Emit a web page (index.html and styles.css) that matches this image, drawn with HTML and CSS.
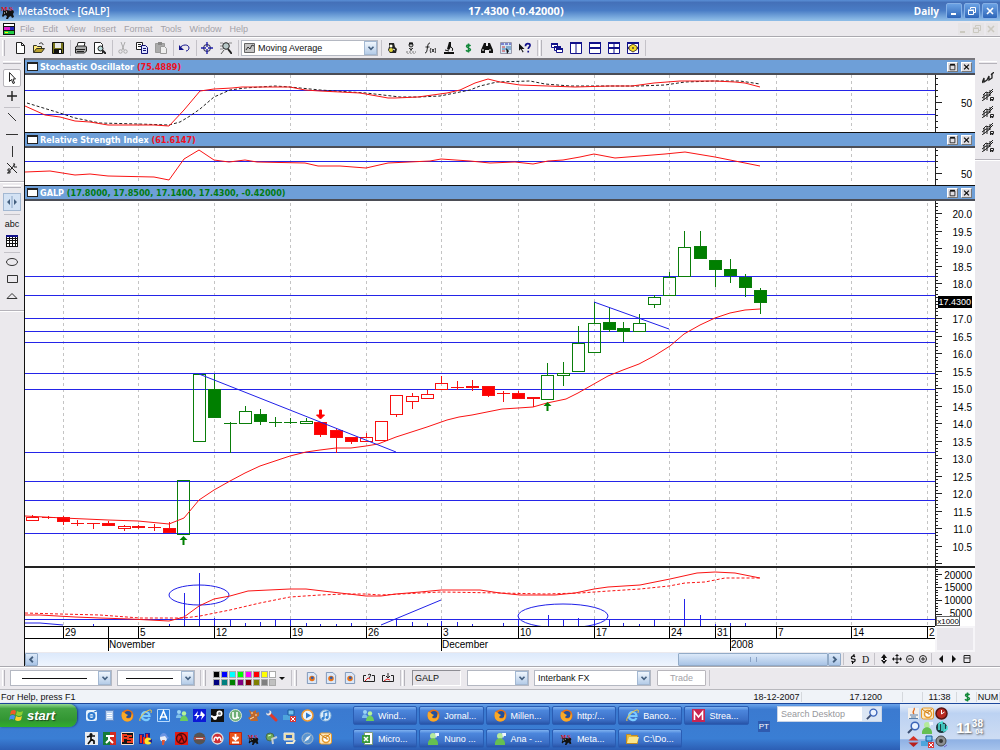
FILE: index.html
```
<!DOCTYPE html>
<html lang="en">
<head>
    <meta charset="UTF-8">
    <meta name="viewport" content="width=device-width, initial-scale=1.0">
    <title>MetaStock - [GALP]</title>
    <link rel="stylesheet" href="styles.css">
</head>
<body>

<!-- icon set -->
<svg class="sprite" aria-hidden="true">
    <symbol id="i-bull" viewBox="-1 -3 16 16"><text x="0" y="5" class="ms">M</text><text x="8" y="5" class="ms">S</text><path d="M2 4l2 1 2-1 3 1 3-1 1 2-1 2 1 3-2 1-1-2-2 1-1 2H5l1-3-2-1-2 2-1-1 1-3z" fill="#111"/><path d="M5 6h1M3 7h1" stroke="#fff"/></symbol>
    <symbol id="i-doc" viewBox="0 0 12 12"><path d="M0 0h12v12H0z" fill="#111"/><path d="M1 1h10v2H1z" fill="#fff"/><path d="M1 4h10v3H1z" fill="#e020d0"/><path d="M7 4h4v3H7z" fill="#22b"/><path d="M1 8h10v3H1z" fill="#2c4"/><path d="M2 9h3v1H2z" fill="#ff0"/></symbol>
    <symbol id="i-new" viewBox="0 0 12 12"><path d="M2.500.500h5l3 3v8h-8zM7.500.500v3h3" fill="#fff" stroke="#222"/></symbol>
    <symbol id="i-open" viewBox="0 0 12 12"><path d="M.500 10.500v-7h3l1 1h4v2" fill="#ffe97a" stroke="#332"/><path d="M.500 10.500l3-4h8l-3 4z" fill="#b8a030" stroke="#332"/><path d="M6 2c2-2 4-1 4 1" fill="none" stroke="#222"/></symbol>
    <symbol id="i-save" viewBox="0 0 12 12"><path d="M.500.500h11v11h-11z" fill="#77741a" stroke="#111"/><path d="M3 1h6v5H3z" fill="#e8e8e8"/><path d="M2 7h8v4H2z" fill="#111"/><path d="M7 8h2v3H7z" fill="#fff"/></symbol>
    <symbol id="i-print" viewBox="0 0 12 12"><path d="M3 .500h7l-1 4H2z" fill="#fff" stroke="#222"/><path d="M.500 5l2-1h8l1 1v4l-2 2h-9z" fill="#a9a9a9" stroke="#222"/><path d="M1 7.500h9M2 9.500h7" stroke="#222"/></symbol>
    <symbol id="i-preview" viewBox="0 0 12 12"><path d="M.500.500h6l2 2v9h-8z" fill="#fff" stroke="#222"/><circle cx="6.500" cy="6.500" r="2.500" fill="#bdd" stroke="#222"/><path d="M8.500 8.500L12 12" stroke="#222" stroke-width="2"/></symbol>
    <symbol id="i-cut" viewBox="0 0 12 12"><path d="M4 0l3 8M8 0L5 8" stroke="#aaa" fill="none"/><circle cx="3.500" cy="9.500" r="1.700" fill="none" stroke="#aaa"/><circle cx="8.500" cy="9.500" r="1.700" fill="none" stroke="#aaa"/></symbol>
    <symbol id="i-copy" viewBox="0 0 12 12"><path d="M.500.500h6v7h-6z" fill="#fff" stroke="#222"/><path d="M2 2.500h3M2 4.500h3" stroke="#222"/><path d="M5.500 3.500h4l2 2v6h-6z" fill="#dfe4ff" stroke="#117"/><path d="M7 6.500h3M7 8.500h3" stroke="#117"/></symbol>
    <symbol id="i-paste" viewBox="0 0 12 12"><path d="M.500 1.500h9v9h-9z" fill="#aaa" stroke="#999"/><path d="M3 0h4v3H3z" fill="#888"/><path d="M5.500 4.500h4l2 2v5h-6z" fill="#eee" stroke="#999"/></symbol>
    <symbol id="i-undo" viewBox="0 0 12 12"><path d="M2 6c2-4 9-4 9 0 0 1-1 3-3 3" fill="none" stroke="#11118a"/><path d="M1 3v5h5z" fill="#11118a"/></symbol>
    <symbol id="i-target" viewBox="0 0 12 12"><circle cx="6" cy="6" r="3.500" fill="none" stroke="#224"/><path d="M6 0v5M6 7v5M0 6h5M7 6h5" stroke="#22a" stroke-width="1.400"/></symbol>
    <symbol id="i-zoom" viewBox="0 0 12 12"><path d="M0 1h3M0 4h2M0 7h3M9 1h3" stroke="#888"/><circle cx="6" cy="4" r="3.300" fill="#b7c7c7" stroke="#222"/><path d="M8 7l4 5" stroke="#222" stroke-width="2"/><path d="M1 12l3-4" stroke="#555"/></symbol>
    <symbol id="i-chart" viewBox="0 0 12 12"><path d="M.500 1.500h10v9h-10z" fill="#c5c5c5" stroke="#666"/><path d="M2 8l2-3 2 2 2-4 2 1" fill="none" stroke="#333"/></symbol>
    <symbol id="i-down" viewBox="0 0 12 12"><path d="M3 4.500l3 3 3-3" fill="none" stroke="#45607f" stroke-width="2"/></symbol>
    <symbol id="i-left" viewBox="0 0 12 12"><path d="M7.500 3l-3 3 3 3" fill="none" stroke="#45607f" stroke-width="2"/></symbol>
    <symbol id="i-right" viewBox="0 0 12 12"><path d="M4.500 3l3 3-3 3" fill="none" stroke="#45607f" stroke-width="2"/></symbol>
    <symbol id="i-bulb" viewBox="0 0 12 12"><path d="M3 1h5l1 4 2 2-1 4H4L2 8l1-3z" fill="#222"/><circle cx="5" cy="4" r="1.500" fill="#ffe"/><circle cx="5" cy="8" r="2" fill="#e4d63a"/><path d="M7 7l2 1" stroke="#fff"/></symbol>
    <symbol id="i-expert" viewBox="0 0 12 12"><circle cx="6" cy="3" r="2" fill="#ccc" stroke="#222"/><path d="M4 1.500h4" stroke="#111" stroke-width="2"/><path d="M6 6v3M4 6l2 2 2-2" stroke="#333" fill="none"/><path d="M1 10h10M2 12h9" stroke="#777" stroke-dasharray="2 1"/></symbol>
    <symbol id="i-fx" viewBox="0 0 12 12"><path d="M1 11c2 0 2-3 2.500-6C4 2 4.500 1 6 1M1.500 5h4" fill="none" stroke="#222"/><path d="M7 6c-1 2-1 3 0 5M8 7l2 3M10 7l-2 3M11 6c1 2 1 3 0 5" fill="none" stroke="#222"/></symbol>
    <symbol id="i-scope" viewBox="0 0 12 12"><path d="M6 0h2v5L6 8 4 7z" fill="#111"/><path d="M2 8l4 1M8 5c2 1 2 3 1 4" fill="none" stroke="#111"/><path d="M1 11h10" stroke="#111" stroke-width="2"/></symbol>
    <symbol id="i-dollar" viewBox="0 0 12 12"><path d="M8.500 4C7.500 2.500 4.500 2.500 4.500 4.200s4 1.600 4 3.400-3.300 2-4.500.600M6.500 1.500v9" fill="none" stroke="#12883a" stroke-width="1.500"/></symbol>
    <symbol id="i-binoc" viewBox="0 0 12 12"><path d="M3 1h2v3h2V1h2l3 7v3H8V8H4v3H0V8z" fill="#111"/><path d="M2 7v2M9 7v2" stroke="#fff"/></symbol>
    <symbol id="i-list" viewBox="0 0 12 12"><path d="M.500.500h11v11h-11z" fill="#d3e5f5" stroke="#99a"/><path d="M1 2h10" stroke="#22a" stroke-dasharray="3 1"/><path d="M2 5h3M2 9h3" stroke="#c33"/><path d="M6 5h5M2 7h9" stroke="#37a"/><path d="M6 6l3 3-2 3z" fill="#111"/></symbol>
    <symbol id="i-help" viewBox="0 0 13 12"><path d="M0 1v8l2-2 2 4 1-1-2-3h3z" fill="#111"/><path d="M7 4c0-4 5-3 5-1 0 2-2 2-2 4M10 9v2" fill="none" stroke="#11118a" stroke-width="1.800"/></symbol>
    <symbol id="i-casc" viewBox="0 0 12 12"><g fill="#fff" stroke="#11118a"><path d="M.500 1.500h6v4h-6z"/><path d="M0 2h7" stroke-width="2"/><path d="M3.500 4.500h6v4h-6z"/><path d="M3 5h7" stroke-width="2"/><path d="M5.500 6.500h6v4h-6z"/><path d="M5 7h7" stroke-width="2"/></g></symbol>
    <symbol id="i-win2" viewBox="0 0 12 12"><path d="M.500.500h11v11h-11zM6 1v11" fill="#fff" stroke="#11118a"/><path d="M0 1h12" stroke="#11118a" stroke-width="2"/></symbol>
    <symbol id="i-win3" viewBox="0 0 12 12"><path d="M.500.500h11v11h-11z" fill="#fff" stroke="#11118a"/><path d="M0 1h12M0 6h12" stroke="#11118a" stroke-width="2"/></symbol>
    <symbol id="i-win4" viewBox="0 0 12 12"><path d="M.500.500h11v11h-11zM6 1v11" fill="#fff" stroke="#11118a"/><path d="M0 1h12M0 6h12" stroke="#11118a" stroke-width="2"/></symbol>
    <symbol id="i-win5" viewBox="0 0 12 12"><path d="M.500.500h11v11h-11z" fill="#fff" stroke="#11118a"/><path d="M0 1h12M0 6h12" stroke="#11118a" stroke-width="2"/><path d="M6 2l4 2.500v3L6 10 2 7.500v-3z" fill="#f4dc28" stroke="#543"/><circle cx="6" cy="6" r="1" fill="#543"/></symbol>
    <symbol id="i-ptr" viewBox="0 0 12 12"><path d="M3.500.500v9l2-2 1.500 4 1.500-.500L7 7h2.500z" fill="#fff" stroke="#222"/></symbol>
    <symbol id="i-plus" viewBox="0 0 12 12"><path d="M6 1v10M1 6h10" stroke="#222" stroke-width="1.400"/></symbol>
    <symbol id="i-diag" viewBox="0 0 12 12"><path d="M2 2l8 8" stroke="#333"/></symbol>
    <symbol id="i-hor" viewBox="0 0 12 12"><path d="M0 6.500h12" stroke="#333"/></symbol>
    <symbol id="i-ver" viewBox="0 0 12 12"><path d="M6.500 1v11" stroke="#333"/></symbol>
    <symbol id="i-gann" viewBox="0 0 12 12"><path d="M1 1l10 10M2 11l7-9M8 1v4h3M4 7H2v2h2v2H1" fill="none" stroke="#222"/></symbol>
    <symbol id="i-split" viewBox="0 0 12 12"><path d="M6 0v12" stroke="#8aa4c4"/><path d="M4 3v6L1 6zM8 3v6l3-3z" fill="#45607f"/></symbol>
    <symbol id="i-grid" viewBox="0 0 12 12"><path d="M0 0h12v12H0z" fill="#fff"/><path d="M.500 0v12M3.500 0v12M6.500 0v12M9.500 0v12M11.500 0v12M0 3.500h12M0 5.500h12M0 8.500h12M0 11.500h12" stroke="#111"/><path d="M0 1h12" stroke="#11118a" stroke-width="2"/></symbol>
    <symbol id="i-ell" viewBox="0 0 12 12"><ellipse cx="6" cy="6" rx="5.500" ry="3.500" fill="none" stroke="#333"/></symbol>
    <symbol id="i-rect" viewBox="0 0 12 12"><path d="M1.500 2.500h10v7h-10z" fill="none" stroke="#333"/></symbol>
    <symbol id="i-tri" viewBox="0 0 12 12"><path d="M6 3.500l5 5H1z" fill="none" stroke="#333"/></symbol>
    <symbol id="i-tr1" viewBox="0 0 12 12"><path d="M0 11l2-5v4l3-2 2-4v4l3-2V1M9 3l3-3" fill="none" stroke="#222" stroke-width="1.300"/></symbol>
    <symbol id="i-tr2" viewBox="0 0 12 12"><path d="M1 6l3-3 3 1 4-4M0 9l4-3 3 0 4-4M0 12l4-3 4-3M2 5v6M5 3v8M8 1v6" fill="none" stroke="#222"/><path d="M8.500 12V8.500h3v2h-3l3 1.500" fill="none" stroke="#222"/></symbol>
    <symbol id="i-max" viewBox="0 0 10 10"><path d="M2 2.500h6v6H2z" fill="none" stroke="#111"/><path d="M2 2h6" stroke="#111" stroke-width="2"/></symbol>
    <symbol id="i-x" viewBox="0 0 10 10"><path d="M2 2l6 6M8 2L2 8" stroke="currentColor" stroke-width="1.600"/></symbol>
    <symbol id="i-min" viewBox="0 0 10 10"><path d="M2 8h5" stroke="currentColor" stroke-width="2"/></symbol>
    <symbol id="i-rest" viewBox="0 0 10 10"><path d="M3.500 3V1.500h5v5H7M1.500 4.500h5v4h-5zM1 4h6" fill="none" stroke="currentColor"/></symbol>
    <symbol id="i-cyc" viewBox="0 0 12 12"><path d="M8 4L6.500 2.500 4.500 4v1.500l3.500 1V8L6 9.500 4.500 8" fill="none" stroke="#111" stroke-width="1.200"/><path d="M7 1v3M5.500 8v3" stroke="#111"/></symbol>
    <symbol id="i-updn" viewBox="0 0 12 12"><path d="M6 1l3 4H3zM6 11l3-4H3zM5 4h2v4H5z" fill="#111"/></symbol>
    <symbol id="i-move" viewBox="0 0 12 12"><path d="M6 2v8M2 6h8" stroke="#111"/><path d="M6 1l2 2H4zM6 11l2-2H4zM1 6l2-2v4zM11 6L9 4v4z" fill="#111"/></symbol>
    <symbol id="i-zout" viewBox="0 0 12 12"><circle cx="6" cy="6" r="3.500" fill="none" stroke="#222"/><path d="M4 6h4" stroke="#222"/></symbol>
    <symbol id="i-zin" viewBox="0 0 12 12"><circle cx="6" cy="6" r="3.500" fill="none" stroke="#222"/><path d="M4 6h4M6 4v4" stroke="#222"/></symbol>
    <symbol id="i-prev" viewBox="0 0 12 12"><path d="M8 2v8L4 6z" fill="#111"/></symbol>
    <symbol id="i-next" viewBox="0 0 12 12"><path d="M4 2v8l4-4z" fill="#111"/></symbol>
    <symbol id="i-cal" viewBox="0 0 12 12"><path d="M3 2.500h6v7H3zM3 5h6" fill="none" stroke="#222"/></symbol>
    <symbol id="i-ffpage" viewBox="0 0 12 13"><path d="M1 .500h7l3 3v9H1z" fill="#dce8f8" stroke="#7b93b5"/><circle cx="6" cy="7" r="3" fill="#e8731a"/><circle cx="6.300" cy="6.300" r="1.500" fill="#2f5fae"/></symbol>
    <symbol id="i-c2" viewBox="0 0 12 12"><path d="M3 3.500H.500v6h11v-6H9M5 3l2-1 1 1-2 3" fill="none" stroke="#222"/><path d="M2 9l3-3 2 1" fill="none" stroke="#d22"/></symbol>
    <symbol id="i-c3" viewBox="0 0 12 12"><path d="M3 3.500H.500v6h11v-6H9M6 1v5M4 4l2 2 2-2" fill="none" stroke="#222"/><path d="M2 9l3-2 3 1" fill="none" stroke="#d22"/></symbol>
    <!-- desktop programs -->
    <symbol id="p-web" viewBox="0 0 13 13"><rect x="1" y="1" width="11" height="11" rx="2" fill="#e6f2fc"/><circle cx="6.500" cy="7" r="3" fill="none" stroke="#2b78cf" stroke-width="2"/><path d="M4 7h6M9 3l3-1" stroke="#2b78cf"/></symbol>
    <symbol id="p-note" viewBox="0 0 13 13"><path d="M2.500 1.500h8v10h-8z" fill="#bcd3f2" stroke="#5f87c5"/><path d="M4 4.500h5M4 6.500h5M4 8.500h5" stroke="#fff"/></symbol>
    <symbol id="p-ff" viewBox="0 0 13 13"><circle cx="6.500" cy="6.500" r="6" fill="#e86f12"/><circle cx="7" cy="5.500" r="3.600" fill="#234f9c"/><path d="M1 3c2 0 3 1 4 2l2 1-2 2c1 2 4 2 5 0l1-4c2 4 0 9-5 8.500C1 12 0 8 1 3z" fill="#f8a928"/></symbol>
    <symbol id="p-ie" viewBox="0 0 13 13"><path d="M10.500 9c-2 3.500-8 2.500-7.500-2.500S10 2 10.500 7H4" fill="none" stroke="#7cccff" stroke-width="2.200"/><path d="M1 12C-1 9 8 0 12 1c1 1 0 2 0 3" fill="none" stroke="#f4c83a"/></symbol>
    <symbol id="p-a" viewBox="0 0 13 13"><path d="M.500.500h12v12H.500z" fill="#2f80dd" stroke="#b9dafc"/><path d="M3 10.500L6.500 2 10 10.500M3 8h7" fill="none" stroke="#fff" stroke-width="1.500"/></symbol>
    <symbol id="p-msn" viewBox="0 0 13 13"><circle cx="4" cy="3" r="2" fill="#9bd4f4"/><path d="M1 9c0-5 5-5 6 0z" fill="#7fc0ea"/><circle cx="9" cy="4.500" r="2.200" fill="#b5f399"/><path d="M5 12c0-7 8-7 8 0z" fill="#6ccc5c"/></symbol>
    <symbol id="p-bolt" viewBox="0 0 13 13"><path d="M0 0h13v13H0z" fill="#0b18d8"/><path d="M5 2L1 7h3l-1 4 4-5H4zM8 2l4 4-4 5 1-4H7z" fill="#fff"/></symbol>
    <symbol id="p-steam" viewBox="0 0 13 13"><path d="M0 0h13v13H0z" fill="#111"/><circle cx="8.500" cy="4.500" r="2.300" fill="#777" stroke="#fff" stroke-width="1.500"/><path d="M0 7l4 2 3-3" stroke="#fff" stroke-width="2" fill="none"/><circle cx="4" cy="9" r="2" fill="#fff"/></symbol>
    <symbol id="p-ut" viewBox="0 0 13 13"><circle cx="6.500" cy="6.500" r="6" fill="#6cae75" stroke="#d6e8da"/><path d="M4 3v5c0 2 4 2 4 0V3v5l2 1" fill="none" stroke="#fff" stroke-width="1.600"/></symbol>
    <symbol id="p-mule" viewBox="0 0 13 13"><path d="M2 1l3 2 4-2v3l3-1v4l-2 1 1 4H4L1 9l3-2z" fill="#c0682c"/><path d="M4 4h2M3 10l4-2M8 6h2" stroke="#ffe3b0"/></symbol>
    <symbol id="p-wrench" viewBox="0 0 13 13"><path d="M5 5l6 6" stroke="#e0392b" stroke-width="3" stroke-linecap="round"/><path d="M3.500 1.500L5 3 3 5 1.500 3.500C.500 6 3 7 5 6l1-1c1-2 0-4-2.500-3.500z" fill="#e5e5e5"/></symbol>
    <symbol id="p-net" viewBox="0 0 13 13"><path d="M0 6h8v5H0z" fill="#4ea5dc"/><path d="M5 1h6v5H5z" fill="#75c3ef" stroke="#1b5d9c"/><path d="M7 7h6v6H7z" fill="#d83a3a"/><path d="M8 8l4 4M12 8l-4 4" stroke="#fff"/></symbol>
    <symbol id="p-wmp" viewBox="0 0 13 13"><circle cx="6.500" cy="6.500" r="5.500" fill="#eaf3fd" stroke="#f09a30" stroke-width="1.500"/><path d="M5 3.500v6l5-3z" fill="#2a79d0"/></symbol>
    <symbol id="p-itunes" viewBox="0 0 13 13"><circle cx="6.500" cy="6.500" r="5.500" fill="#d8eaf8" stroke="#8db7da"/><path d="M5 9.500V3.500l4-1v6" fill="none" stroke="#2e7fd2" stroke-width="1.300"/><circle cx="4" cy="9.500" r="1.400" fill="#2e7fd2"/><circle cx="8" cy="8.500" r="1.400" fill="#2e7fd2"/></symbol>
    <symbol id="p-cs" viewBox="0 0 13 13"><path d="M0 0h13v13H0z" fill="#e9edf2"/><circle cx="6" cy="2.500" r="1.500" fill="#111"/><path d="M2 5l3-1h5M6 4v4l-3 4M6 7l3 2v3" stroke="#111" stroke-width="1.700" fill="none"/></symbol>
    <symbol id="p-flag" viewBox="0 0 13 13"><path d="M0 0h13v13H0z" fill="#157b38"/><path d="M7 0h6v13H7z" fill="#cf2a22"/><path d="M3 4h8M6 3v5l-3 3M6 7l4 4" stroke="#fff" stroke-width="2" fill="none"/></symbol>
    <symbol id="p-fs" viewBox="0 0 13 13"><path d="M.500.500h12v12H.500z" fill="#161616" stroke="#f4ddd0"/><path d="M2 10V3h4M2 6h4M11 4H7v3h4v3H6" fill="none" stroke="#ee3a1c" stroke-width="2"/></symbol>
    <symbol id="p-pac" viewBox="0 0 13 13"><path d="M0 2h5v10H0zM6 1h5v7H6z" fill="#22218e"/><path d="M2 3v8M5 5v7M8 2v4" stroke="#ee2c1b" stroke-width="2"/><circle cx="9" cy="9" r="3.500" fill="#ffe52b"/><path d="M9 9l4-2v4z" fill="#22218e"/></symbol>
    <symbol id="p-santa" viewBox="0 0 13 13"><circle cx="6.500" cy="6" r="3.500" fill="#e8edf7"/><path d="M3 5c1-5 6-5 7-1l2 2-2 1-2-3z" fill="#6a94e2"/><path d="M5 8h3l-1 5H5z" fill="#dd5436"/></symbol>
    <symbol id="p-hl" viewBox="0 0 13 13"><path d="M0 0h13v13H0z" fill="#e21d15"/><circle cx="6.500" cy="6.500" r="5" fill="none" stroke="#5c0a08" stroke-width="1.400"/><path d="M4 3h2l3 7M6.500 6L4 10" fill="none" stroke="#5c0a08" stroke-width="1.500"/></symbol>
    <symbol id="p-gun" viewBox="0 0 13 13"><circle cx="6.500" cy="6.500" r="6" fill="#575352"/><path d="M1 5h11v3H1z" fill="#a34d48"/><path d="M3 6.500h7" stroke="#ddd"/></symbol>
    <symbol id="p-ball" viewBox="0 0 13 13"><circle cx="6.500" cy="6.500" r="5.500" fill="#cf3036" stroke="#ddd" stroke-width="1.300"/><path d="M3 9c0-4 2-5 3.500-2C8 4 10 5 10 9" fill="none" stroke="#fff" stroke-width="1.500"/></symbol>
    <symbol id="p-dl" viewBox="0 0 13 13"><path d="M.500.500h12v12H.500z" fill="#e8531a" stroke="#bb2412"/><path d="M6.500 2v5M3.500 5l3 3 3-3M3 10.500h7" stroke="#fff" stroke-width="1.800" fill="none"/></symbol>
    <symbol id="p-key" viewBox="0 0 13 13"><circle cx="5" cy="5" r="4" fill="#6eaa58" stroke="#465"/><path d="M7 7l5-2M7 6l1 6" stroke="#c8cfd6" stroke-width="2"/><path d="M3 4l3-1" stroke="#dfc"/></symbol>
    <symbol id="p-mon" viewBox="0 0 13 13"><path d="M1 1h10v7H1z" fill="#e9dba0" stroke="#e8e8e8"/><path d="M3 3h6v3H3z" fill="#2f66c0"/><path d="M3 11h7l2-3" stroke="#f2ead0" stroke-width="2" fill="none"/></symbol>
    <symbol id="p-comp" viewBox="0 0 13 13"><circle cx="6.500" cy="6.500" r="5.500" fill="#5b95cf" stroke="#a9bac9"/><path d="M10 3L7.500 7.500 3 10l2.500-4.500z" fill="#f1f4f6"/></symbol>
    <symbol id="p-out" viewBox="0 0 13 13"><rect x=".500" y="1" width="12" height="11" rx="2" fill="#fbe9c4" stroke="#e79b2c"/><circle cx="7" cy="7" r="3.500" fill="#fff" stroke="#e79b2c" stroke-width="1.500"/><path d="M1 2l5 4 5-4M7 5v2h2" fill="none" stroke="#c77a15"/></symbol>
    <symbol id="p-xls" viewBox="0 0 13 13"><path d="M3.500.500h8v12h-8z" fill="#fff" stroke="#7b9c7b"/><path d="M1 3h8v8H1z" fill="#3a9a3c"/><path d="M3 5l4 4M7 5L3 9" stroke="#fff" stroke-width="1.500"/></symbol>
    <symbol id="p-bud" viewBox="0 0 13 13"><circle cx="6" cy="4" r="3" fill="#b4ea9c"/><path d="M1 13c-1-9 11-9 10 0z" fill="#65bf52"/><path d="M8 1h4v3h-2l-1 2z" fill="#eef6ff"/></symbol>
    <symbol id="p-dir" viewBox="0 0 13 13"><path d="M.500 2.500h4l1 1h6v8H.500z" fill="#e8bb3d" stroke="#c08a20"/><path d="M1 11l2-6h10l-2 6z" fill="#fbe58c"/></symbol>
    <symbol id="p-m" viewBox="0 0 13 13"><path d="M0 0h13v13H0z" fill="#c82452"/><path d="M2.500 11V3l4 5 4-5v8" fill="none" stroke="#fff" stroke-width="1.600"/></symbol>
    <symbol id="p-java" viewBox="0 0 13 13"><path d="M1 1h11v11H1z" fill="#f3f0ec"/><path d="M7 1c2 2-3 3 0 6" fill="none" stroke="#e06a20" stroke-width="1.300"/><path d="M3 8h6M4 10h5M9 8h2M2 11.500h9" stroke="#5a7fa8"/></symbol>
    <symbol id="p-clk" viewBox="0 0 13 13"><circle cx="6.500" cy="6.500" r="5.500" fill="#b82a22" stroke="#571512" stroke-width="1.500"/><path d="M6.500 3v4l3-2" stroke="#fff" fill="none"/></symbol>
    <symbol id="p-mag" viewBox="0 0 13 13"><circle cx="8" cy="5" r="3.800" fill="#e9f2ff" stroke="#3a63b8" stroke-width="1.500"/><path d="M5 8l-4 4" stroke="#3a4d70" stroke-width="2"/></symbol>
    <symbol id="p-sync" viewBox="0 0 13 13"><circle cx="6.500" cy="6.500" r="5.500" fill="#1e3b3f"/><path d="M4 9V3l3-2v9M9 3v7l3-2V5" fill="none" stroke="#4be0d8" stroke-width="1.600"/></symbol>
    <symbol id="p-ud" viewBox="0 0 13 13"><path d="M6.500 1l5 4.500h-10z" fill="#d33328"/><path d="M6.500 12l5-4.500h-10z" fill="#b7201c"/></symbol>
    <symbol id="p-vol" viewBox="0 0 13 13"><circle cx="6" cy="6" r="5" fill="#8c8f92" stroke="#444"/><circle cx="6" cy="6" r="2" fill="#333"/><path d="M9 12l3-2" stroke="#76c"/></symbol>
    <symbol id="p-win" viewBox="0 0 14 13"><path d="M2 2q3-2 5 0L6 6q-2-2-5 0z" fill="#f0592a"/><path d="M8 2q3 2 6 0l-1 4q-3 2-6 0z" fill="#8ed032"/><path d="M1 7q3-2 5 0l-1 4q-2-2-5 0z" fill="#4a8cf0"/><path d="M7 7q3 2 6 0l-1 4q-3 2-6 0z" fill="#fbd02e"/></symbol>
</svg>

<header class="titlebar">
    <svg class="logo"><use href="#i-bull"/></svg>
    <h1>MetaStock - [GALP]</h1>
    <span class="quote">17.4300 (-0.42000)</span>
    <span class="period">Daily</span>
    <button class="win-btn" aria-label="Minimize"><svg><use href="#i-min"/></svg></button>
    <button class="win-btn" aria-label="Restore"><svg><use href="#i-rest"/></svg></button>
    <button class="win-btn" aria-label="Close"><svg><use href="#i-x"/></svg></button>
</header>

<nav class="menubar">
    <svg class="ico"><use href="#i-doc"/></svg>
    <button>File</button>
    <button>Edit</button>
    <button>View</button>
    <button>Insert</button>
    <button>Format</button>
    <button>Tools</button>
    <button>Window</button>
    <button>Help</button>
    <span class="spacer"></span>
    <button class="doc-btn" aria-label="Minimize chart"><svg><use href="#i-min"/></svg></button>
    <button class="doc-btn" aria-label="Restore chart"><svg><use href="#i-rest"/></svg></button>
    <button class="doc-btn" aria-label="Close chart"><svg><use href="#i-x"/></svg></button>
</nav>

<div class="toolbar">
    <span class="grip"></span>
    <span class="tools" data-icons="new open save | print preview | cut copy paste | undo | target zoom |"></span>
    <span class="combo indicator">
        <svg class="ico"><use href="#i-chart"/></svg>
        <select aria-label="Indicator"><option>Moving Average</option></select>
        <span class="drop"><svg><use href="#i-down"/></svg></span>
    </span>
    <span class="tools" data-icons="| bulb expert fx scope dollar binoc list help |"></span>
    <span class="grip"></span>
    <span class="tools" data-icons="casc win2 win3 win4 win5 |"></span>
</div>

<main class="workspace">
    <aside class="side left">
        <div class="group">
            <span class="hgrip"></span>
            <button class="tool active" aria-label="Select"><svg><use href="#i-ptr"/></svg></button>
            <span class="tools col" data-icons="plus | diag hor ver gann"></span>
        </div>
        <div class="group">
            <span class="hgrip"></span>
            <button class="tool blue" aria-label="Split"><svg><use href="#i-split"/></svg></button>
            <span class="tools col" data-icons="|"></span>
            <button class="tool abc">abc</button>
            <span class="tools col" data-icons="grid | ell rect tri"></span>
        </div>
    </aside>

    <div class="charts">
        <section>
            <div class="panel-title">
                <i></i><h2>Stochastic Oscillator <b class="red">(75.4889)</b></h2>
                <button aria-label="Maximize"><svg><use href="#i-max"/></svg></button>
                <button aria-label="Close"><svg><use href="#i-x"/></svg></button>
            </div>
            <div class="row"><svg class="plot" id="stoch" height="57" viewBox="25 74 910 57" preserveAspectRatio="none"></svg><svg class="axis" id="stochAxis" width="40" height="57" viewBox="935 74 40 57"></svg></div>
        </section>
        <section>
            <div class="panel-title">
                <i></i><h2>Relative Strength Index <b class="red">(61.6147)</b></h2>
                <button aria-label="Maximize"><svg><use href="#i-max"/></svg></button>
                <button aria-label="Close"><svg><use href="#i-x"/></svg></button>
            </div>
            <div class="row"><svg class="plot" id="rsi" height="37" viewBox="25 148 910 37" preserveAspectRatio="none"></svg><svg class="axis" id="rsiAxis" width="40" height="37" viewBox="935 148 40 37"></svg></div>
        </section>
        <section>
            <div class="panel-title">
                <i></i><h2>GALP <b class="green">(17.8000, 17.8500, 17.1400, 17.4300, -0.42000)</b></h2>
                <button aria-label="Maximize"><svg><use href="#i-max"/></svg></button>
                <button aria-label="Close"><svg><use href="#i-x"/></svg></button>
            </div>
            <div class="row"><svg class="plot" id="price" height="365" viewBox="25 201 910 365" preserveAspectRatio="none"></svg><svg class="axis" id="priceAxis" width="40" height="365" viewBox="935 201 40 365"></svg></div>
        </section>
        <section class="volume">
            <div class="row"><svg class="plot" id="volume" height="58" viewBox="25 568 910 58" preserveAspectRatio="none"></svg><svg class="axis" id="volumeAxis" width="40" height="58" viewBox="935 568 40 58"></svg></div>
        </section>
        <div class="row dates-row">
            <svg class="dates" id="dates" height="26"></svg>
            <span class="corner"></span>
        </div>
        <div class="scroll-row">
            <div class="scroll">
                <button aria-label="Scroll left"><svg><use href="#i-left"/></svg></button>
                <span class="thumb"></span>
                <button aria-label="Scroll right"><svg><use href="#i-right"/></svg></button>
            </div>
            <span class="tools small" data-icons="| cyc"></span>
            <button class="tool period-btn">D</button>
            <span class="tools small" data-icons="| updn move zout zin | prev next cal"></span>
        </div>
    </div>

    <aside class="side right">
        <div class="group">
            <span class="hgrip"></span>
            <span class="tools col" data-icons="tr1 tr2 tr2 tr2 tr2"></span>
        </div>
    </aside>
</main>

<div class="toolbar bottom">
    <span class="grip"></span>
    <span class="combo line-style"><select aria-label="Line style"></select><span class="drop"><svg><use href="#i-down"/></svg></span></span>
    <span class="combo line-weight"><select aria-label="Line weight"></select><span class="drop"><svg><use href="#i-down"/></svg></span></span>
    <span class="sep"></span>
    <span class="grip"></span>
    <span class="palette" id="palette"></span>
    <span class="caret"></span>
    <span class="sep"></span>
    <span class="grip"></span>
    <span class="tools" data-icons="ffpage ffpage ffpage c2 c3 |"></span>
    <span class="grip"></span>
    <input class="symbol" type="text" value="GALP" aria-label="Symbol">
    <span class="combo order"><select aria-label="Order"></select><span class="drop"><svg><use href="#i-down"/></svg></span></span>
    <span class="combo broker"><select aria-label="Broker"><option>Interbank FX</option></select><span class="drop"><svg><use href="#i-down"/></svg></span></span>
    <button class="trade" disabled>Trade</button>
    <span class="sep"></span>
</div>

<footer class="statusbar">
    <span class="msg">For Help, press F1</span>
    <span class="st-date">18-12-2007</span>
    <span class="st-price">17.1200</span>
    <span class="st-gap"></span>
    <span class="st-time">11:38</span>
    <span class="st-usd"><svg class="ico"><use href="#i-dollar"/></svg></span>
    <span class="st-num">NUM</span>
</footer>

<div class="taskbar">
    <button class="start"><svg><use href="#p-win"/></svg>start</button>
    <div class="launch" id="launch"></div>
    <div class="tasks" id="tasks"></div>
    <span class="lang">PT</span>
    <form class="search">
        <input type="text" placeholder="Search Desktop" aria-label="Search Desktop">
        <button type="button" aria-label="Search"><svg><use href="#p-mag"/></svg></button>
    </form>
    <div class="tray">
        <div class="tray-icons" id="tray"></div>
        <div class="clock">11<span>38<small>04</small></span></div>
    </div>
</div>

<script>
    function icon(id) {
        return '<svg><use href="#' + id + '"/></svg>';
    }

    // toolbars
    document.querySelectorAll('[data-icons]').forEach(function(box) {
        box.innerHTML = box.dataset.icons.split(' ').map(function(name) {
            if (name === '|') return '<span class="sep"></span>';
            return '<button class="tool" aria-label="' + name + '">' + icon('i-' + name) + '</button>';
        }).join('');
    });

    var colors = ['#000', '#00f', '#0ff', '#0f0', '#f0f', '#f00', '#ff0', '#fff',
                  '#000080', '#008080', '#008000', '#800080', '#800000', '#808000', '#808080', '#c0c0c0'];
    document.getElementById('palette').innerHTML = colors.map(function(c) {
        return '<button style="background:' + c + '" aria-label="' + c + '"></button>';
    }).join('');

    var programs = 'p-web p-note p-ff p-ie p-a p-msn p-bolt p-steam p-ut p-mule p-wrench p-net p-wmp p-itunes ' +
                   'p-cs p-flag p-fs p-pac p-santa p-hl p-gun p-ball p-dl i-bull p-key p-mon p-comp p-out';
    document.getElementById('launch').innerHTML = programs.split(' ').map(function(id) {
        return '<button aria-label="' + id + '">' + icon(id) + '</button>';
    }).join('');

    var tasks = [['p-msn', 'Wind...'], ['p-ff', 'Jornal...'], ['p-ff', 'Millen...'], ['p-ff', 'http:/...'], ['p-ie', 'Banco...'], ['p-m', 'Strea...'],
                 ['p-xls', 'Micro...'], ['p-bud', 'Nuno ...'], ['p-bud', 'Ana - ...'], ['i-bull', 'Meta...'], ['p-dir', 'C:\\Do...']];
    document.getElementById('tasks').innerHTML = tasks.map(function(t) {
        return '<button>' + icon(t[0]) + '<span>' + t[1] + '</span></button>';
    }).join('');

    document.getElementById('tray').innerHTML = 'p-java p-out p-clk p-mag p-bud p-sync p-ud p-net p-vol'.split(' ').map(icon).join('');

    // charts
    var weeks = [[63, '29'], [138, '5'], [214, '12'], [290, '19'], [366, '26'], [441, '3'], [518, '10'], [594, '17'],
                 [669, '24'], [715, '31'], [776, '7'], [851, '14'], [927, '2']];
    var months = [[108, 'November'], [441, 'December'], [730, '2008']];

    // center, body top, body bottom, high, low, color (r/g), filled
    var candles = [
        [32, 517, 520, 515, 520, 'r', 0], [48, 517, 517, 516, 518, 'r', 0], [63, 517, 521, 516, 524, 'r', 1],
        [77, 523, 523, 520, 525, 'r', 0], [93, 523, 523, 523, 528, 'r', 0], [108, 523, 525, 521, 525, 'r', 1],
        [124, 526, 528, 525, 530, 'r', 0], [138, 526, 527, 525, 528, 'r', 1], [154, 527, 527, 524, 530, 'r', 0],
        [169, 528, 532, 522, 532, 'r', 1], [183, 480, 534, 480, 534, 'g', 0], [199, 374, 441, 374, 441, 'g', 0],
        [214, 389, 417, 374, 417, 'g', 1], [230, 423, 423, 422, 452, 'g', 0], [245, 411, 423, 406, 423, 'g', 0],
        [260, 414, 421, 409, 424, 'g', 1], [275, 422, 422, 417, 426, 'g', 0], [290, 422, 422, 418, 423, 'g', 0],
        [306, 421, 423, 418, 423, 'g', 0], [320, 422, 434, 422, 436, 'r', 1], [336, 430, 437, 428, 452, 'r', 1],
        [351, 437, 441, 437, 443, 'r', 1], [366, 437, 441, 433, 441, 'r', 0], [381, 421, 440, 421, 440, 'r', 0],
        [396, 395, 414, 395, 416, 'r', 0], [412, 396, 401, 393, 408, 'r', 0], [427, 394, 398, 390, 398, 'r', 0],
        [441, 383, 389, 376, 389, 'r', 0], [457, 387, 387, 381, 389, 'r', 1], [472, 386, 387, 380, 390, 'r', 1],
        [488, 386, 395, 386, 396, 'r', 1], [503, 393, 393, 391, 401, 'r', 0], [518, 393, 398, 391, 398, 'r', 1],
        [533, 397, 398, 397, 406, 'r', 0], [547, 375, 399, 363, 399, 'g', 0], [563, 373, 375, 362, 385, 'g', 0],
        [578, 343, 371, 326, 371, 'g', 0], [594, 323, 352, 302, 352, 'g', 0], [609, 322, 329, 307, 331, 'g', 1],
        [623, 328, 331, 322, 341, 'g', 1], [639, 323, 331, 314, 331, 'g', 0], [654, 297, 304, 295, 307, 'g', 0],
        [669, 277, 295, 272, 295, 'g', 0], [684, 247, 276, 231, 276, 'g', 0], [700, 246, 258, 231, 258, 'g', 1],
        [715, 260, 269, 260, 286, 'g', 1], [730, 269, 275, 259, 282, 'g', 1], [745, 277, 287, 274, 296, 'g', 1],
        [760, 290, 302, 288, 313, 'g', 1]
    ];

    function line(x1, y1, x2, y2, cls) {
        return '<path class="' + cls + '" d="M' + x1 + ' ' + y1 + 'L' + x2 + ' ' + y2 + '"/>';
    }

    function series(points, cls) {
        return '<polyline class="' + cls + '" points="' + points + '"/>';
    }

    function gridAndLevels(top, bottom, levels) {
        return weeks.map(function(w) {
            return line(w[0] + 0.5, top, w[0] + 0.5, bottom, 'grid');
        }).join('') + levels.map(function(y) {
            return line(25, y + 0.5, 935, y + 0.5, 'level');
        }).join('');
    }

    function axis(id, from, to, step, major, labels) {
        var svg = document.getElementById(id);
        var out = line(935.5, 0, 935.5, 750, 'tick');
        var n = 0;
        for (var y = from; y < to; y += step, n++) {
            out += line(935, Math.floor(y) + 0.5, n % major[1] === major[0] ? 942 : 938, Math.floor(y) + 0.5, 'tick');
        }
        labels.forEach(function(l) {
            out += '<text x="972" y="' + (l[0] + 4) + '">' + l[1] + '</text>';
        });
        svg.innerHTML = out;
    }

    function arrow(x, tip, dir, cls) {
        return '<path class="' + cls + '" d="M' + x + ' ' + tip + 'l4 ' + 4 * dir + 'h-3v' + 5 * dir + 'h-2v' + -5 * dir + 'h-3z"/>';
    }

    document.getElementById('stoch').innerHTML = gridAndLevels(74, 129, [89, 113]) +
        series('27,102 63,113 75,117 100,122 138,123 169,124 180,121 190,115 200,108 214,96 230,89 245,87 275,85 290,86 320,89 366,92 400,96 418,96 440,95 470,89 480,85 497,81 530,80 545,83 570,85 609,85 639,85 665,84 685,81 715,80 740,80 760,83', 'dash-black') +
        series('25,105 45,114 60,116 75,120 90,121 108,124 154,124 169,125 184,109 200,90 214,88 232,87 242,86 290,86 305,89 320,90 340,91 360,92 377,95 388,97 395,97 418,96 447,92 460,89 475,82 488,78 500,81 520,84 575,86 610,85 632,85 654,82 680,80 715,80 735,81 745,82 760,86', 'curve');
    axis('stochAxis', 77, 130, 6.2, [4, 99], [[102, '50']]);

    document.getElementById('rsi').innerHTML = gridAndLevels(148, 183, [161]) +
        series('25,172 50,171 75,175 90,174 108,176 154,177 169,180 184,159 199,150 214,160 229,162 245,160 257,162 305,163 318,166 340,166 366,168 388,163 430,161 441,159 470,161 490,163 515,162 533,164 548,161 563,160 580,157 594,154 615,158 640,156 665,154 685,152 715,157 745,163 760,166', 'curve');
    axis('rsiAxis', 150, 183, 5.8, [4, 99], [[174, '50']]);

    var candleSvg = candles.map(function(c) {
        var cls = 'candle ' + c[5] + (c[6] ? ' full' : '');
        var x = c[0] + 0.5;
        var body = c[1] === c[2]
            ? line(c[0] - 6, c[1] + 0.5, c[0] + 7, c[1] + 0.5, cls)
            : '<rect class="' + cls + '" x="' + (x - 6) + '" y="' + (c[1] + 0.5) + '" width="12" height="' + (c[2] - c[1]) + '"/>';
        return line(x, c[3], x, c[1], cls) + line(x, c[2], x, c[4] + 1, cls) + body;
    }).join('');

    document.getElementById('price').innerHTML =
        gridAndLevels(203, 565, [276, 295, 318, 331, 342, 373, 389, 452, 481, 500, 533]) + candleSvg +
        series('25,516 63,518 108,520 138,521 169,524 184,518 199,500 214,490 230,481 245,473 260,466 278,460 290,456 306,452 320,450 336,448 351,448 366,446 378,444 396,437 427,427 447,420 459,417 472,415 502,409 518,408 533,407 547,403 566,399 578,393 608,376 623,370 639,364 654,356 670,346 684,334 700,325 715,318 730,313 745,310 760,309', 'curve') +
        line(199, 374, 396, 452, 'trend') + line(594, 302, 669, 329, 'trend') +
        arrow(183.5, 536, 1, 'up') + arrow(547.5, 402, 1, 'up') + arrow(320.5, 419, -1, 'dn');

    var prices = [];
    for (var v = 20; v >= 10.5; v -= 0.5) {
        if (v !== 17.5) prices.push([214 + (20 - v) * 35, v.toFixed(1)]);
    }
    axis('priceAxis', 203, 565, 3.5, [3, 5], prices);
    document.getElementById('priceAxis').innerHTML += '<rect x="938" y="296" width="34" height="12"/><text class="last" x="971" y="305">17.4300</text>';

    var volumes = [[93, 624], [169, 624], [184, 593], [199, 573], [214, 618], [230, 620], [245, 623], [260, 622], [275, 620], [290, 619],
                   [306, 623], [320, 624], [336, 624], [351, 623], [396, 618], [412, 622], [427, 623], [441, 621], [457, 622], [472, 624],
                   [503, 623], [518, 620], [548, 615], [563, 620], [578, 618], [594, 619], [609, 620], [623, 623], [639, 624], [654, 620],
                   [684, 599], [700, 615], [715, 624], [730, 623], [745, 623]];
    document.getElementById('volume').innerHTML = gridAndLevels(568, 626, [619]) +
        volumes.map(function(b) { return line(b[0] + 0.5, b[1], b[0] + 0.5, 626, 'level'); }).join('') +
        series('25,623 40,623 63,625', 'trend') + line(381, 625, 441, 600, 'trend') +
        '<ellipse class="trend" cx="199" cy="595" rx="30" ry="10"/><ellipse class="trend" cx="563" cy="616" rx="45" ry="12"/>' +
        series('25,613 60,614 100,615 140,618 184,618 200,616 230,610 260,603 290,597 320,595 345,594 366,594 380,595 441,592 500,593 545,594 580,593 609,591 640,589 669,586 685,583 705,582 725,578 760,578', 'curve dashed') +
        series('25,615 40,615 75,617 100,618 130,619 150,620 169,621 184,617 199,606 214,599 230,596 248,591 290,589 306,589 340,593 366,596 381,596 396,594 420,592 441,590 480,590 500,593 520,595 555,595 575,593 594,589 608,587 640,585 670,579 697,573 715,572 735,573 760,578', 'curve');
    axis('volumeAxis', 569, 626, 2.65, [2, 5], [[575, '20000'], [587, '15000'], [600, '10000'], [613, '5000']]);
    document.getElementById('volumeAxis').innerHTML += '<rect class="unit" x="936.5" y="616.5" width="23" height="9"/><text class="unit-text" x="959" y="624">x1000</text>';

    // date labels keep their shape while the plots follow the window width
    function pct(x) {
        return (x - 25) / 910 * 100 + '%';
    }
    document.getElementById('dates').innerHTML = '<rect width="100%" height="1"/><rect y="12" width="100%" height="1"/>' +
        weeks.map(function(w) {
            return '<rect x="' + pct(w[0]) + '" width="1" height="12"/><text x="' + pct(w[0] + 2) + '" y="10">' + w[1] + '</text>';
        }).join('') +
        months.map(function(m) {
            return '<rect x="' + pct(m[0]) + '" width="1" height="25"/><text x="' + pct(m[0] + 1) + '" y="22">' + m[1] + '</text>';
        }).join('');
</script>

</body>
</html>
```
FILE: styles.css
```
* {
    box-sizing: border-box;
}

body {
    font-family: 'Liberation Sans', Arial, sans-serif;
    font-size: 9px;
    background-color: #ebe9ed;
    color: #111;
    margin: 0;
    min-height: 100vh;
    display: flex;
    flex-direction: column;
}

button, input, select {
    font: inherit;
    margin: 0;
    padding: 0;
    border: none;
    background: none;
    border-radius: 0;
    color: inherit;
}

h1, h2 {
    margin: 0;
}

svg {
    display: block;
    flex-shrink: 0;
}

.sprite {
    position: absolute;
    width: 0;
    height: 0;
}

.ms {
    font: bold 7px 'Liberation Serif', serif;
    fill: #e01010;
}

.ico {
    width: 12px;
    height: 12px;
}

.spacer {
    flex: 1;
}

/* title bar */
.titlebar {
    display: flex;
    align-items: center;
    height: 21px;
    padding: 0 2px 0 0;
    gap: 2px;
    background: linear-gradient(#5a8fd6, #4470b8 12%, #4a7dc6 50%, #8cbbe6 95%);
    color: #fff;
    font: bold 10px 'Open Sans', sans-serif;
}

.titlebar h1 {
    flex: 6;
    font-size: 10px;
    font-weight: 600;
}

.logo {
    width: 16px;
    height: 16px;
}

.quote {
    font-size: 11px;
}

.period {
    flex: 5;
    text-align: right;
    padding-right: 5px;
}

.win-btn {
    display: grid;
    place-items: center;
    width: 16px;
    height: 16px;
    border: 1px solid #85b0e6;
    border-radius: 2px;
    background: linear-gradient(#6ba2e4, #2d65b8);
}

.win-btn svg, .doc-btn svg, .panel-title svg {
    width: 10px;
    height: 10px;
}

.menubar {
    display: flex;
    align-items: center;
    height: 15px;
    padding: 0 2px 0 3px;
    gap: 8px;
    color: #a3a1a8;
}

.menubar .ico {
    margin-right: -3px;
}

.menubar .doc-btn {
    width: 12px;
    height: 12px;
    margin-left: -6px;
    color: #cbc9c0;
    background: #e6e4e6;
}

/* toolbars */
.toolbar {
    display: flex;
    align-items: center;
    height: 22px;
    padding-left: 2px;
    border-top: 1px solid #aaa9af;
    box-shadow: inset 0 1px #fff;
}

.grip {
    width: 3px;
    height: 16px;
    margin-right: 5px;
    border-left: 1px solid #fff;
    border-right: 1px solid #b5b3ba;
}

.sep {
    width: 4px;
    height: 16px;
    border-right: 1px solid #c4c2c8;
}

.tools {
    display: flex;
    align-items: center;
}

.tool {
    display: grid;
    place-items: center;
    width: 19px;
    height: 18px;
}

.tool svg {
    width: 12px;
    height: 12px;
}

.combo {
    display: flex;
    align-items: center;
    height: 16px;
    padding: 1px;
    border: 1px solid #b4b8c2;
    background: #fff;
}

.combo select {
    appearance: none;
    flex: 1;
    min-width: 0;
    height: 12px;
    padding-left: 2px;
}

.drop {
    display: grid;
    place-items: center;
    width: 13px;
    height: 14px;
    margin-right: -1px;
    border: 1px solid #a3b8d2;
    background: linear-gradient(#f0f6fd, #b5cce8);
}

.drop svg {
    width: 10px;
    height: 10px;
}

.indicator {
    width: 137px;
    margin-left: 2px;
    padding-left: 2px;
}

.toolbar > .tools + .grip {
    margin-left: 1px;
}

/* workspace */
.workspace {
    display: flex;
    flex: 1;
}

.side {
    width: 24px;
}

.side.right {
    width: 25px;
}

.group {
    display: flex;
    flex-direction: column;
    align-items: center;
    padding: 3px 1px 5px;
    border-bottom: 1px solid #b5b3ba;
    box-shadow: 0 1px #fff;
}

.group + .group {
    padding-bottom: 6px;
}

.hgrip {
    width: 18px;
    height: 3px;
    margin-bottom: 5px;
    border-top: 1px solid #fff;
    border-bottom: 1px solid #b5b3ba;
}

.col {
    flex-direction: column;
}

.col .sep {
    width: 16px;
    height: 4px;
    border-right: none;
    border-bottom: 1px solid #c4c2c8;
}

.side .tool {
    width: 18px;
    height: 17px;
}

.side .active {
    height: 18px;
    border: 1px solid #b7b5bb;
    border-radius: 2px;
    background: #fff;
}

.side .blue {
    height: 18px;
    border: 1px solid #a3b8d2;
    background: #d3e2f4;
}

.charts {
    flex: 1;
    min-width: 0;
    border-left: 1px solid #111;
    border-top: 1px solid #77767c;
    background: #fff;
}

.panel-title {
    display: flex;
    align-items: center;
    gap: 2px;
    height: 16px;
    padding: 0 3px 0 2px;
    background: #6e9fd8;
    border-top: 1px solid #111;
    border-bottom: 2px solid #4b4d55;
}

section:first-child .panel-title {
    border-top-color: #77767c;
}

.panel-title i {
    width: 11px;
    height: 9px;
    background: #fff;
    border: 1px solid #222;
    border-top-width: 2px;
}

.panel-title h2 {
    flex: 1;
    font: bold 9px/12px 'DejaVu Sans Condensed', Tahoma, sans-serif;
    color: #fff;
}

.red {
    color: #f01020;
}

.green {
    color: #007a10;
}

.panel-title button {
    width: 11px;
    height: 10px;
    border: 1px solid #fff;
    border-right-color: #777;
    border-bottom-color: #777;
    background: #dfdde2;
    color: #111;
}

.panel-title button + button {
    margin-left: 1px;
}

.panel-title button svg {
    width: 9px;
    height: 8px;
}

.row {
    display: flex;
}

.plot {
    flex: 1;
    min-width: 0;
}

.volume {
    border-top: 2px solid #222;
}

.plot path, .plot rect, .plot polyline, .plot ellipse {
    fill: none;
    vector-effect: non-scaling-stroke;
}

.plot .grid {
    stroke: #c4c4c4;
    stroke-dasharray: 3 3;
    shape-rendering: crispEdges;
}

.plot .level {
    stroke: #2424e8;
    shape-rendering: crispEdges;
}

.plot .trend {
    stroke: #2020e8;
}

.plot .curve {
    stroke: #fa1414;
}

.plot .dashed {
    stroke-dasharray: 3 2;
}

.plot .dash-black {
    stroke: #222;
    stroke-dasharray: 3 2;
}

.candle {
    shape-rendering: crispEdges;
}

.plot .r {
    stroke: #f81010;
}

.plot .g {
    stroke: #0a7d0a;
}

.plot .r.full, .plot .dn {
    fill: #ff0000;
}

.plot .g.full, .plot .up {
    fill: #007f00;
}

.plot .dn {
    stroke: #ff0000;
}

.axis .tick {
    stroke: #222;
    shape-rendering: crispEdges;
}

.axis text {
    font-size: 10px;
    text-anchor: end;
}

.axis .last {
    font-size: 9px;
    fill: #fff;
}

.axis .unit {
    fill: #fff;
    stroke: #666;
}

.axis .unit-text {
    font-size: 8px;
}

.dates {
    flex: 1;
    min-width: 0;
}

.dates text {
    font-size: 10px;
}

.corner {
    width: 40px;
    border: 2px solid #f6f5f8;
    background: #e9e7ec;
}

/* scroll bar and zoom buttons */
.scroll-row {
    display: flex;
    align-items: center;
    height: 14px;
    background: #ebe9ed;
}

.scroll {
    display: flex;
    flex: 1;
    height: 13px;
    background: linear-gradient(#dce9fb, #eff5fe);
}

.scroll button, .thumb {
    display: grid;
    place-items: center;
    width: 13px;
    border: 1px solid #92abc8;
    border-radius: 1px;
    background: linear-gradient(#dce9f9, #a9c4e6);
}

.scroll button svg {
    width: 11px;
    height: 11px;
}

.thumb {
    width: 150px;
    margin-left: auto;
}

.thumb::before {
    content: '';
    width: 5px;
    height: 5px;
    border: 1px solid #8aa3c6;
    border-width: 0 1px;
}

.small .tool, .period-btn {
    width: 13px;
    height: 14px;
}

.small .sep {
    width: 3px;
    height: 12px;
    margin-right: 2px;
}

.period-btn {
    font: 10px 'Liberation Serif', serif;
}

.small:last-child {
    padding-right: 2px;
}

/* bottom toolbar */
.bottom {
    height: 23px;
}

.line-style {
    width: 102px;
    margin-right: 5px;
}

.line-weight {
    width: 78px;
    margin-right: 2px;
}

.line-style select, .line-weight select {
    background: linear-gradient(#111, #111) center / 76% 1px no-repeat;
}

.bottom .grip {
    margin-left: 2px;
}

.bottom > .grip:first-child {
    margin-left: 0;
}

.palette {
    display: grid;
    grid-template-columns: repeat(8, 7px);
    gap: 1px;
    margin-left: 2px;
}

.palette button {
    height: 7px;
    border: 1px solid #aaa;
}

.caret {
    margin: 0 3px;
    border: 3px solid transparent;
    border-top-color: #111;
    border-bottom: none;
}

.symbol {
    width: 49px;
    height: 16px;
    margin-left: 2px;
    margin-right: 6px;
    padding-left: 2px;
    border: 1px solid #8e8d94;
    border-right-color: #fff;
    border-bottom-color: #fff;
    background: #e6e4e9;
}

.order {
    width: 62px;
    margin-right: 5px;
}

.broker {
    width: 117px;
    margin-right: 6px;
}

.trade {
    width: 49px;
    height: 16px;
    border: 1px solid #b8b6bc;
    border-radius: 1px;
    background: #fff;
    color: #a3a1a8;
}

/* status bar */
.statusbar {
    display: flex;
    align-items: center;
    height: 14px;
    background: #f0f3f8;
    border-top: 1px solid #b8b8bd;
}

.statusbar span {
    display: flex;
    align-items: center;
    justify-content: center;
    height: 10px;
    border-right: 1px solid #d5d8dd;
}

.statusbar .msg {
    flex: 1;
    justify-content: flex-start;
    padding-left: 1px;
    border: none;
}

.st-date {
    width: 50px;
}

.statusbar .st-price {
    width: 101px;
    justify-content: flex-end;
    padding-right: 20px;
}

.st-gap {
    width: 20px;
}

.st-time {
    width: 34px;
}

.st-usd {
    width: 20px;
}

.st-num {
    width: 23px;
}

/* taskbar */
.taskbar {
    display: flex;
    align-items: flex-start;
    height: 47px;
    border-top: 1px solid #1d489c;
    background: linear-gradient(#6aa3ea, #3b7ad0 12%, #3a7ed4 75%, #2c5eb4);
}

.start {
    display: flex;
    align-items: center;
    gap: 4px;
    width: 77px;
    height: 23px;
    padding-left: 9px;
    border-radius: 0 8px 8px 0;
    background: linear-gradient(#94d890, #42a342 20%, #329632 70%, #2fae2c);
    box-shadow: 1px 0 2px #1c3e80;
    color: #fff;
    font: italic bold 13px 'Liberation Sans', sans-serif;
    text-shadow: 1px 1px 1px #1c4a1c;
}

.start svg {
    width: 14px;
    height: 13px;
}

.launch {
    display: grid;
    grid-template-columns: repeat(14, 18px);
    grid-template-rows: 23px 23px;
    margin-left: 5px;
}

.launch button {
    display: grid;
    place-items: center;
}

.launch svg, .tray svg {
    width: 13px;
    height: 13px;
}

.tasks {
    flex: 1;
    display: grid;
    grid-template-columns: repeat(6, 1fr);
    grid-auto-rows: 19px;
    gap: 4px 2px;
    margin-left: 19px;
    padding-top: 2px;
}

.tasks button {
    display: flex;
    align-items: center;
    gap: 4px;
    min-width: 0;
    padding-left: 7px;
    border: 1px solid #2a5db4;
    border-radius: 2px;
    background: linear-gradient(#7fb2f0, #4c86dc 20%, #3b6fc6 75%, #2854a8);
    color: #fff;
    white-space: nowrap;
}

.tasks svg {
    width: 13px;
    height: 13px;
}

.lang {
    margin: 17px 7px 0 9px;
    padding: 0 1px;
    line-height: 11px;
    font-size: 8px;
    background: #2f5bb0;
    color: #fff;
}

.search {
    display: flex;
    width: 105px;
    height: 16px;
    margin: 2px 18px 0 0;
    border: 1px solid #c9d4e6;
    background: #fff;
}

.search input {
    flex: 1;
    min-width: 0;
    padding-left: 3px;
}

.search input::placeholder {
    color: #96979c;
}

.search button {
    display: grid;
    place-items: center;
    width: 19px;
    background: #dbe6f4;
}

.search button svg {
    width: 12px;
    height: 12px;
}

.tray {
    display: flex;
    align-items: center;
    gap: 7px;
    width: 100px;
    height: 46px;
    padding-left: 7px;
    background: linear-gradient(#e4edfa, #bcd2f2 20%, #cddcf3 75%, #8fb1e4 78%, #a6c3ec);
}

.tray-icons {
    display: grid;
    grid-template-columns: repeat(3, 14px);
    gap: 1px 0;
}

.clock {
    display: flex;
    align-items: center;
    color: #fff;
    font: bold 15px 'Liberation Sans', sans-serif;
    text-shadow: 1px 1px 2px #555;
}

.clock span {
    display: flex;
    flex-direction: column;
    align-items: flex-end;
    font-size: 10px;
    line-height: 9px;
}

.clock small {
    font-size: 7px;
    line-height: 7px;
}
```
